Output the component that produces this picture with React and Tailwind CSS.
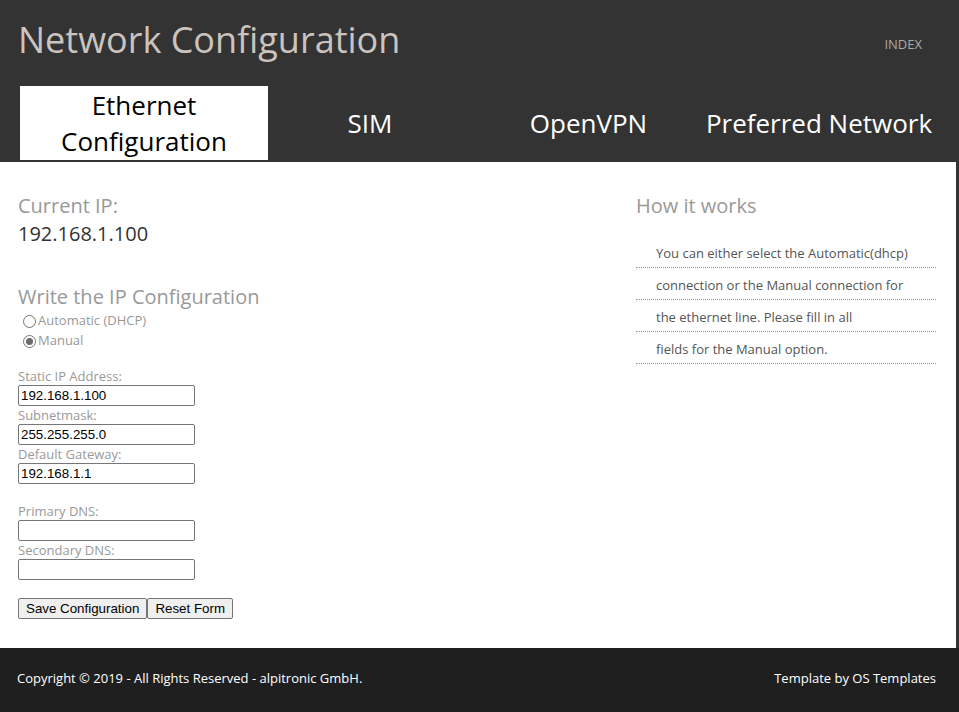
import { useState } from 'react'

const TABS = [
  { label: 'Ethernet Configuration', w: 'w-[248px]' },
  { label: 'SIM', w: 'w-[204px]' },
  { label: 'OpenVPN', w: 'w-[233px]' },
  { label: 'Preferred Network', w: 'w-[228px]' },
]

const HELP = [
  'You can either select the Automatic(dhcp)',
  'connection or the Manual connection for',
  'the ethernet line. Please fill in all',
  'fields for the Manual option.',
]

function Radio({ checked, label, onClick }) {
  return (
    <label onClick={onClick} className="flex items-center h-5 pl-[5px] cursor-pointer">
      <span className="w-[13px] h-[13px] rounded-full border border-[#767676] bg-white flex items-center justify-center mr-[2px]">
        {checked && <span className="w-[7px] h-[7px] rounded-full bg-[#6b6b6b]" />}
      </span>
      <span className="text-[13px] text-[#999]">{label}</span>
    </label>
  )
}

function Field({ label, value }) {
  return (
    <div>
      <div className="text-[13px] leading-[18px] text-[#999]">{label}</div>
      <input
        defaultValue={value}
        className="block w-[177px] h-[21px] border border-[#767676] rounded-[2px] px-[2px] text-[13.33px] text-black outline-none"
        style={{ fontFamily: '"Liberation Sans", Arial, sans-serif' }}
      />
    </div>
  )
}

export default function App() {
  const [mode, setMode] = useState('manual')

  return (
    <div className="min-h-screen bg-[#1f1f1f]" style={{ fontFamily: '"Open Sans", sans-serif' }}>
      {/* Header */}
      <header className="bg-[#333] h-[162px] pl-[18px] border-r-[3px] border-[#333]">
        <div className="flex justify-between items-start pr-[34px]">
          <h1 className="text-[36px] leading-[48px] pt-[16px] text-[#cbc3bf]">Network Configuration</h1>
          <a className="text-[13px] text-[#aaa] mt-[35px]">INDEX</a>
        </div>
        <nav className="flex mt-[22px] pl-[2px]">
          {TABS.map((t, i) => (
            <div
              key={t.label}
              className={`${t.w} shrink-0 h-[74px] flex items-center justify-center text-center text-[26px] leading-[36px] whitespace-pre-line ${i === 0 ? 'bg-white text-black' : 'text-white'}`}
            >
              {i === 0 ? 'Ethernet\nConfiguration' : t.label}
            </div>
          ))}
        </nav>
      </header>

      {/* Content */}
      <main className="bg-white flex px-[18px] pt-[30px] h-[486px] border-r-[3px] border-[#333]">
        <div className="w-[618px]">
          <h2 className="text-[20px] leading-[28px] text-[#999]">Current IP:</h2>
          <p className="text-[20px] leading-[28px] text-[#333]">192.168.1.100</p>

          <h2 className="text-[20px] leading-[28px] text-[#999] mt-[35px]">Write the IP Configuration</h2>
          <Radio checked={mode === 'dhcp'} label="Automatic (DHCP)" onClick={() => setMode('dhcp')} />
          <Radio checked={mode === 'manual'} label="Manual" onClick={() => setMode('manual')} />

          <div className="mt-[16px]">
            <Field label="Static IP Address:" value="192.168.1.100" />
            <Field label="Subnetmask:" value="255.255.255.0" />
            <Field label="Default Gateway:" value="192.168.1.1" />
          </div>
          <div className="mt-[18px]">
            <Field label="Primary DNS:" value="" />
            <Field label="Secondary DNS:" value="" />
          </div>

          <div className="flex mt-[18px] text-[13.33px]" style={{ fontFamily: '"Liberation Sans", Arial, sans-serif' }}>
            <button className="h-[21px] px-[7px] bg-[#efefef] border border-[#767676] rounded-[2px] text-black">Save Configuration</button>
            <button className="h-[21px] px-[7px] bg-[#efefef] border border-[#767676] rounded-[2px] text-black">Reset Form</button>
          </div>
        </div>

        <aside className="w-[300px]">
          <h2 className="text-[20px] leading-[28px] text-[#999]">How it works</h2>
          <ul className="mt-[16px]">
            {HELP.map((line) => (
              <li key={line} className="h-[32px] leading-[31px] pt-[2px] pl-[20px] text-[13px] text-[#555] border-b border-dotted border-[#999]">
                {line}
              </li>
            ))}
          </ul>
        </aside>
      </main>

      {/* Footer */}
      <footer className="bg-[#1f1f1f] h-[64px] px-[17px] flex justify-between items-center text-[13px] text-white pr-[23px] pb-[2px]">
        <span>Copyright © 2019 - All Rights Reserved - alpitronic GmbH.</span>
        <span>Template by OS Templates</span>
      </footer>
    </div>
  )
}
